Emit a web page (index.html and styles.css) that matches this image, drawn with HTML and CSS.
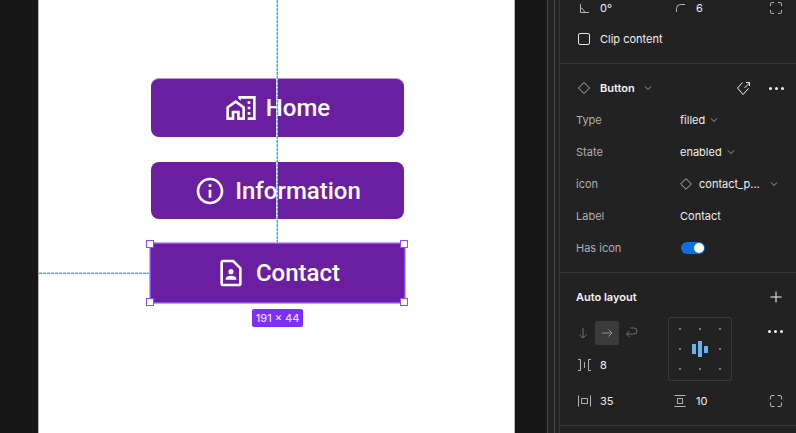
FILE: index.html
```html
<!DOCTYPE html>
<html lang="en">
<head>
    <meta charset="UTF-8">
    <title>Button component</title>
    <link rel="stylesheet" href="styles.css">
</head>
<body>
    <div id="editor">
        <main id="canvas">
            <div id="artboard">
                <button class="demo-btn btn-home">
                    <svg viewBox="0 0 24 24"><path d="M17 7h2v2h-2zM17 11h2v2h-2zM17 15h2v2h-2zM1 11v10h6v-5h2v5h6V11L8 6l-7 5zm12 8h-2v-5H5v5H3v-7l5-3.5 5 3.500v7zM10 3v1.970l2 1.430V5h9v14h-4v2h6V3z"/></svg>
                    Home
                </button>
                <button class="demo-btn btn-info">
                    <svg viewBox="0 0 24 24"><path d="M11 7h2v2h-2zm0 4h2v6h-2zm1-9C6.48 2 2 6.48 2 12s4.48 10 10 10 10-4.48 10-10S17.52 2 12 2zm0 18c-4.41 0-8-3.59-8-8s3.59-8 8-8 8 3.59 8 8-3.59 8-8 8z"/></svg>
                    Information
                </button>
                <button class="demo-btn btn-contact">
                    <svg viewBox="0 0 24 24"><path d="M14 2H6c-1.1 0-2 .9-2 2v16c0 1.1.9 2 2 2h12c1.1 0 2-.9 2-2V8l-6-6zm4 18H6V4h7.17L18 8.83V20zm-6-7c1.1 0 2-.9 2-2s-.9-2-2-2-2 .9-2 2 .9 2 2 2zm4 3.43c0-.81-.48-1.53-1.22-1.85C13.93 14.21 12.99 14 12 14s-1.93.21-2.78.58C8.48 14.9 8 15.62 8 16.43V17h8v-.57z"/></svg>
                    Contact
                    <span class="handle tl"></span>
                    <span class="handle tr"></span>
                    <span class="handle bl"></span>
                    <span class="handle br"></span>
                    <span class="size-badge">191 × 44</span>
                </button>
                <div class="guide guide-v"></div>
                <div class="guide guide-h"></div>
            </div>
        </main>

        <div id="rail"><span></span></div>

        <aside id="panel">
            <section class="section section-frame">
                <div class="frame-row first">
                    <div class="cell">
                        <svg class="ico" viewBox="0 0 16 16"><path d="M4.500 4v8.500h8.500M4.500 8c2 .2 3.600 2 4 4.500" /></svg>
                        <span>0°</span>
                    </div>
                    <div class="cell">
                        <svg class="ico" viewBox="0 0 16 16"><path d="M4.500 12V8.500a4 4 0 0 1 4-4H13" /></svg>
                        <span>6</span>
                    </div>
                    <svg class="ico" viewBox="0 0 16 16"><path d="M2.500 6V4A1.500 1.500 0 0 1 4 2.500h2M10 2.500h2A1.500 1.500 0 0 1 13.500 4v2M13.500 10v2a1.500 1.500 0 0 1-1.500 1.500h-2M6 13.500H4A1.500 1.500 0 0 1 2.500 12v-2" /></svg>
                </div>
                <div class="frame-row clip">
                    <div class="cell">
                        <span class="checkbox"></span>
                        <span>Clip content</span>
                    </div>
                </div>
            </section>

            <section class="section section-props">
                <div class="section-head">
                    <svg class="ico" viewBox="0 0 16 16"><path d="M8 2.500 13.500 8 8 13.500 2.500 8z" /></svg>
                    <strong>Button</strong>
                    <svg class="chev" viewBox="0 0 8 8"><path d="M1 2.500 4 5.500 7 2.500" /></svg>
                    <svg class="ico ico-tag" viewBox="0 0 16 16"><path d="M6.500 2.500 1.500 8 7 14.500l5.500-6M8.500 8 13.500 3M10 2.500h3.500V6" /></svg>
                    <span class="dots"><i></i><i></i><i></i></span>
                </div>
                <div class="prop"><label>Type</label><div class="val">filled <svg class="chev" viewBox="0 0 8 8"><path d="M1 2.500 4 5.500 7 2.500" /></svg></div></div>
                <div class="prop"><label>State</label><div class="val">enabled <svg class="chev" viewBox="0 0 8 8"><path d="M1 2.500 4 5.500 7 2.500" /></svg></div></div>
                <div class="prop">
                    <label>icon</label>
                    <div class="val val-icon">
                        <svg class="ico-sm" viewBox="0 0 12 12"><path d="M6 .7 11.300 6 6 11.300 .7 6z" /></svg>
                        <span>contact_p...</span>
                        <svg class="chev" viewBox="0 0 8 8"><path d="M1 2.500 4 5.500 7 2.500" /></svg>
                    </div>
                </div>
                <div class="prop"><label>Label</label><div class="val">Contact</div></div>
                <div class="prop"><label>Has icon</label><div class="val"><span class="toggle"><i></i></span></div></div>
            </section>

            <section class="section section-layout">
                <div class="section-head">
                    <strong>Auto layout</strong>
                    <svg class="ico ico-plus" viewBox="0 0 16 16"><path d="M8 2.500v11M2.500 8h11" /></svg>
                </div>
                <div class="layout-grid">
                    <div class="layout-left">
                        <div class="dir-row">
                            <span class="dir"><svg viewBox="0 0 16 16"><path d="M8 3v10M4.500 9.500 8 13l3.500-3.500" /></svg></span>
                            <span class="dir active"><svg viewBox="0 0 16 16"><path d="M3 8h10M9.500 4.500 13 8l-3.500 3.500" /></svg></span>
                            <span class="dir"><svg viewBox="0 0 16 16"><path d="M7.500 3h3.500a3 3 0 0 1 0 6H3.500M6.500 6l-3 3 3 3" /></svg></span>
                        </div>
                        <div class="cell gap-cell">
                            <svg class="ico" viewBox="0 0 16 16"><path d="M2 2.500h2.500v11H2M15 2.500h-2.500v11H15M8.500 5v6" /></svg>
                            <span>8</span>
                        </div>
                    </div>
                    <div class="align-box">
                        <i></i><i></i><i></i>
                        <i></i><div class="align-bars"><b></b><b></b><b></b></div><i></i>
                        <i></i><i></i><i></i>
                    </div>
                    <span class="dots dots-layout"><i></i><i></i><i></i></span>
                </div>
                <div class="frame-row padding-row">
                    <div class="cell">
                        <svg class="ico" viewBox="0 0 16 16"><path d="M2.500 2.500v11M14.500 2.500v11M5.500 5.500h6v5h-6z" /></svg>
                        <span>35</span>
                    </div>
                    <div class="cell">
                        <svg class="ico" viewBox="0 0 16 16"><path d="M2.500 2.500h11M2.500 13.500h11M5.500 5.500h5v5h-5z" /></svg>
                        <span>10</span>
                    </div>
                    <svg class="ico" viewBox="0 0 16 16"><path d="M2.500 6.500V4A1.500 1.500 0 0 1 4 2.500h2.500M9.500 2.500H12A1.500 1.500 0 0 1 13.500 4v2.500M13.500 9.500V12a1.500 1.500 0 0 1-1.500 1.500H9.500M6.500 13.500H4A1.500 1.500 0 0 1 2.500 12V9.500" /></svg>
                </div>
            </section>
        </aside>
    </div>
</body>
</html>
```

FILE: styles.css
```css
* {
    box-sizing: border-box;
}
html, body {
    margin: 0;
    padding: 0;
    height: 100%;
    overflow: hidden;
}
body {
    background: #171717;
    font-family: Inter, "Liberation Sans", sans-serif;
}
#editor {
    display: flex;
    width: 796px;
    height: 433px;
    overflow: hidden;
}

/* canvas */
#canvas {
    width: 547px;
    padding-left: 38px;
    background: #171717;
}
#artboard {
    position: relative;
    width: 477px;
    height: 433px;
    padding: 79px 0 0 112px;
    background: #fff;
    border-left: 1px solid #b5b5b5;
    border-right: 1px solid #b5b5b5;
    display: flex;
    flex-direction: column;
    gap: 25px;
}
.demo-btn {
    position: relative;
    display: flex;
    justify-content: center;
    align-items: center;
    gap: 9px;
    width: 253px;
    padding: 0;
    border: none;
    border-radius: 8px;
    background: #691fa0;
    color: #fff;
    font-family: Roboto, sans-serif;
    font-size: 24px;
    font-weight: 500;
}
.demo-btn svg {
    width: 32px;
    height: 32px;
    fill: #fff;
}
.btn-home {
    height: 58px;
    box-shadow: 0 -1px 0 rgba(105, 31, 160, 0.45);
}
.btn-info {
    height: 57px;
}
.btn-contact {
    height: 58px;
    border-radius: 0;
    box-shadow: 0 0 0 1.5px #8f4bff;
}
.handle {
    position: absolute;
    width: 8px;
    height: 8px;
    background: #fff;
    border: 1px solid #8f4bff;
}
.handle.tl { left: -5px; top: -4px; }
.handle.tr { right: -4px; top: -4px; }
.handle.bl { left: -5px; bottom: -4px; }
.handle.br { right: -4px; bottom: -4px; }
.size-badge {
    position: absolute;
    left: 101px;
    top: 65px;
    width: 51px;
    height: 18px;
    line-height: 18px;
    border-radius: 2px;
    background: #7c2fff;
    color: #e8dcff;
    font-family: Inter, sans-serif;
    font-size: 11px;
    font-weight: 500;
    white-space: nowrap;
    text-align: center;
}
.guide {
    position: absolute;
}
.guide-v {
    left: 237px;
    top: 0;
    height: 243px;
    width: 2px;
    background:
        linear-gradient(to right, rgba(255, 255, 255, 0.55) 0 1px, transparent 1px 2px),
        repeating-linear-gradient(to bottom, #4ba3f4 0 3px, #c4e2fb 3px 4px);
}
.guide-h {
    left: 0;
    top: 272px;
    width: 111px;
    height: 2px;
    background:
        linear-gradient(to bottom, rgba(255, 255, 255, 0.55) 0 1px, transparent 1px 2px),
        repeating-linear-gradient(to right, #4ba3f4 0 3px, #c4e2fb 3px 4px);
}

/* thin strip next to the panel */
#rail {
    width: 13px;
    background: #222;
    border-left: 1px solid #4a4a4a;
    border-right: 1px solid #3a3a3a;
}
#rail span {
    display: block;
    width: 1px;
    height: 100%;
    margin-left: 6px;
    background: #4a4a4a;
}

/* right panel */
#panel {
    width: 236px;
    background: #222;
    color: #f0f0f0;
    font-size: 11px;
}
.section {
    padding: 0 12px 8px 16px;
    border-bottom: 1px solid #383838;
}
.section-frame {
    height: 64px;
}
.section-props {
    height: 209px;
    padding-top: 8px;
}
.section-layout {
    height: 153px;
    padding-top: 8px;
}
svg path {
    fill: none;
    stroke: #b4b4b4;
    stroke-width: 1;
}
.demo-btn svg path {
    fill: #fff;
    stroke: none;
}
.frame-row {
    display: grid;
    grid-template-columns: 96px 96px 16px;
    align-items: center;
}
.frame-row.first {
    height: 14px;
    margin-bottom: 9px;
}
.frame-row.clip {
    height: 32px;
}
.padding-row {
    height: 32px;
    margin-top: 4px;
}
.cell {
    display: flex;
    align-items: center;
    gap: 8px;
}
.ico {
    width: 16px;
    height: 16px;
    flex: none;
}
.checkbox {
    width: 12px;
    height: 12px;
    margin: 0 2px;
    border: 1px solid #e6e6e6;
    border-radius: 2px;
}
.section-head {
    display: flex;
    align-items: center;
    height: 32px;
}
.section-head strong {
    font-weight: 600;
    color: #f5f5f5;
}
.section-props .section-head strong {
    margin-left: 8px;
    font-size: 11px;
}
.section-head .chev {
    margin-left: 9px;
}
.chev {
    width: 8px;
    height: 8px;
    flex: none;
}
.chev path {
    stroke: #a0a0a0;
}
.ico-tag {
    margin-left: auto;
}
.ico-tag path {
    stroke: #f0f0f0;
}
.ico-plus {
    margin-left: auto;
}
.ico-plus path {
    stroke: #f5f5f5;
}
.dots {
    display: flex;
    justify-content: space-between;
    width: 15px;
    margin: 0 0 0 17px;
}
.dots i {
    width: 3px;
    height: 3px;
    border-radius: 50%;
    background: #f0f0f0;
}
.prop {
    display: grid;
    grid-template-columns: 104px 1fr;
    align-items: center;
    height: 32px;
}
.prop label {
    color: #b0b0b0;
}
.val {
    display: flex;
    align-items: center;
    gap: 5px;
}
.val-icon {
    gap: 7px;
}
.val-icon .chev {
    margin-left: 3px;
}
.ico-sm {
    width: 12px;
    height: 12px;
    flex: none;
}
.toggle {
    display: flex;
    justify-content: flex-end;
    align-items: center;
    width: 24px;
    height: 12px;
    margin-left: 1px;
    padding-right: 1px;
    border-radius: 6px;
    background: #0d6fe0;
}
.toggle i {
    width: 10px;
    height: 10px;
    border-radius: 50%;
    background: #fff;
}
.layout-grid {
    display: flex;
    height: 64px;
    margin-top: 4px;
}
.layout-left {
    width: 92px;
}
.dir-row {
    display: flex;
    height: 24px;
    margin-top: 4px;
}
.dir {
    display: flex;
    justify-content: center;
    align-items: center;
    width: 24px;
    height: 24px;
    border-radius: 2px;
}
.dir:first-child {
    width: 19px;
    justify-content: flex-start;
}
.dir:first-child svg {
    margin-left: -1px;
}
.dir svg {
    width: 16px;
    height: 16px;
}
.dir path {
    stroke: #6f6f6f;
}
.dir.active {
    background: #3b3b3b;
}
.dir.active path {
    stroke: #8f8f8f;
}
.gap-cell {
    height: 32px;
    margin-top: 4px;
}
.align-box {
    display: grid;
    grid-template-columns: repeat(3, 20px);
    grid-template-rows: repeat(3, 20px);
    place-items: center;
    width: 64px;
    height: 64px;
    padding: 1px;
    border: 1px solid #3a3a3a;
    border-radius: 2px;
}
.align-box > i {
    width: 2px;
    height: 2px;
    background: #7a7a7a;
}
.align-bars {
    display: flex;
    align-items: center;
    gap: 2px;
}
.align-bars b {
    width: 4px;
    background: #6ab2ee;
}
.align-bars b:nth-child(1) { height: 10px; }
.align-bars b:nth-child(2) { height: 16px; }
.align-bars b:nth-child(3) { height: 7px; }
.dots-layout {
    margin: 13px 0 0 36px;
    height: 3px;
}
```
